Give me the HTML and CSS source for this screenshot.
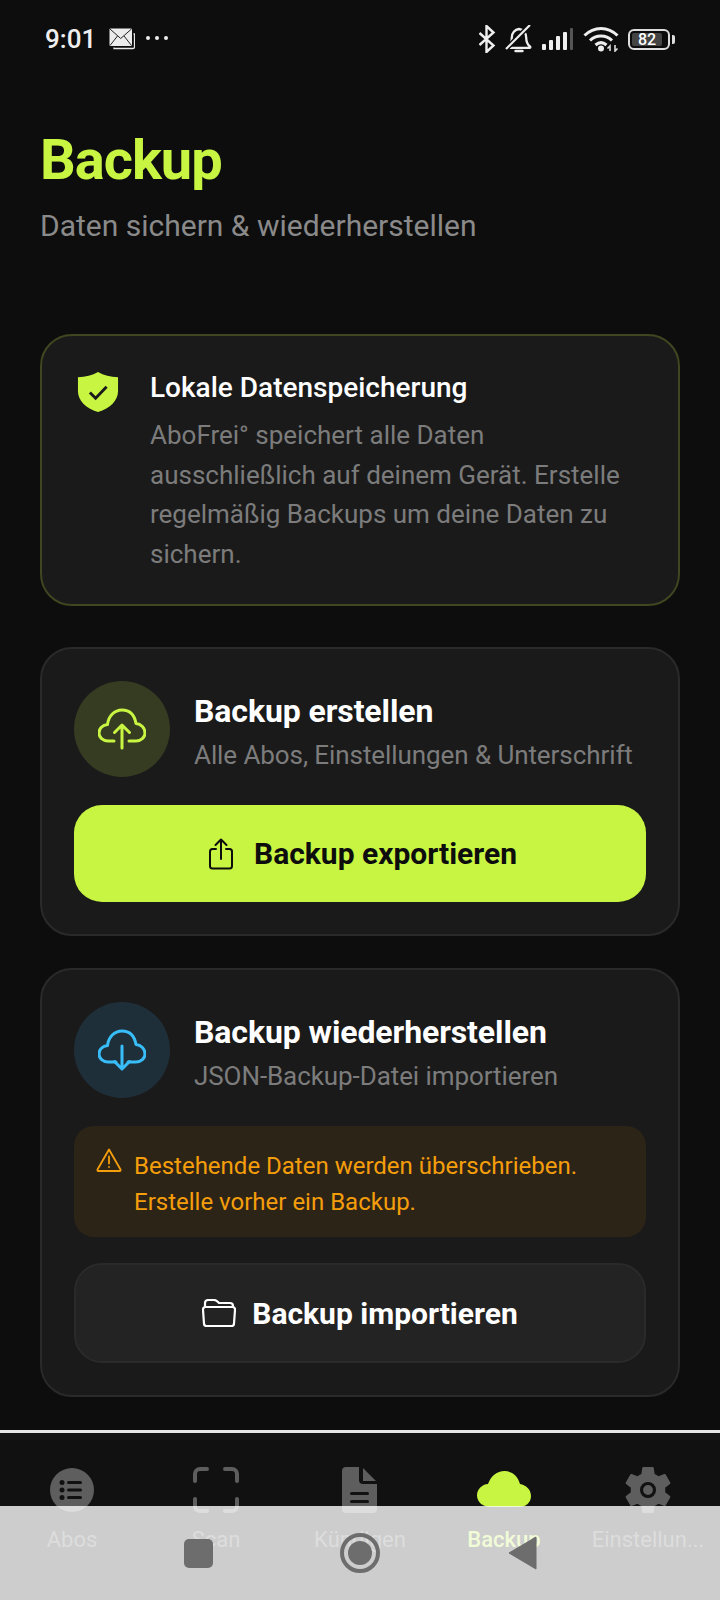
FILE: index.html
```html
<!DOCTYPE html>
<html lang="de">
<head>
  <meta charset="UTF-8" />
  <meta name="viewport" content="width=device-width, initial-scale=1.0"/>
  <title>Backup</title>
  <link rel="stylesheet" href="styles.css">
</head>
<body>
  <div class="app">
    <div class="statusbar">
      <div class="status-left">
        <span class="time">9:01</span>
        <svg class="ic-mail" width="26" height="22" viewBox="0 0 26 22">
          <path d="M5 19.500v1h19a1.500 1.500 0 0 0 1.500-1.500V6h-1" fill="none" stroke="#e8e8e8" stroke-width="1.300"/>
          <rect x="0.500" y="0.500" width="22.500" height="17.500" rx="1" fill="#ececec"/>
          <path d="M1 1l10.700 9.500L22.500 1M1 17.500l7.500-9.500M22.500 17.500L15 8" fill="none" stroke="#222" stroke-width="1"/>
        </svg>
        <span class="dots"><i></i><i></i><i></i></span>
      </div>
      <div class="status-right">
        <svg width="18" height="28" viewBox="0 0 18 28"><path d="M1.500 8l14 12.500L8.500 27V1l7 6.500L1.500 20" fill="none" stroke="#eee" stroke-width="2.400"/></svg>
        <svg class="ic-bell" width="28" height="28" viewBox="0 0 28 28">
          <path d="M3 21.500c2.800-2 3.800-4.500 3.800-9 0-4.500 3-8 7.200-8.500 4.200.5 7.200 4 7.200 8.500 0 4.500 1 7 3.800 9 .6.800.3 1.300-.5 1.300H3.500c-.8 0-1.100-.5-.5-1.300z" fill="none" stroke="#eee" stroke-width="2.300"/>
          <path d="M10.500 26h7" stroke="#eee" stroke-width="2.400" stroke-linecap="round"/>
          <path d="M1 24L25 0" stroke="#0d0d0d" stroke-width="5"/>
          <path d="M1 24L25 0" stroke="#eee" stroke-width="2.200"/>
        </svg>
        <svg class="ic-signal" width="32" height="22" viewBox="0 0 32 22">
          <rect x="0" y="16" width="4" height="6" rx="1" fill="#eee"/>
          <rect x="7" y="12" width="4" height="10" rx="1" fill="#eee"/>
          <rect x="14" y="8" width="4" height="14" rx="1" fill="#eee"/>
          <rect x="21" y="4" width="4" height="18" rx="1" fill="#eee"/>
          <rect x="28" y="0" width="3" height="22" rx="1" fill="#555"/>
        </svg>
        <svg class="ic-wifi" width="36" height="26" viewBox="0 0 36 26">
          <path d="M1.500 9.500C11 0 25 0 34.500 9.500M7 14.500c6-6 16-6 22 0M12.500 19c3.500-3 7.500-3 11 0" fill="none" stroke="#eee" stroke-width="3"/>
          <circle cx="18" cy="22.500" r="3" fill="#eee"/>
          <path d="M27 25v-5l-2.500 2.500M32 19v6l2.500-2.500" fill="none" stroke="#ddd" stroke-width="1.600"/>
        </svg>
        <div class="battery">
          <div class="battery-body"><span class="battery-fill">82</span></div>
          <div class="battery-cap"></div>
        </div>
      </div>
    </div>

    <div class="content">
      <div class="page-title">Backup</div>
      <div class="page-sub">Daten sichern &amp; wiederherstellen</div>

      <div class="card card-info">
        <svg class="shield" width="42" height="42" viewBox="0 0 44 44">
          <path d="M22 1c6 3.500 13 5 21 5.500V21c0 10-8 18-21 22C9 39 1 31 1 21V6.500C9 6 16 4.500 22 1z" fill="#c8f542"/>
          <path d="M13.500 22.500l6 6L31 16.500" fill="none" stroke="#1a1a1a" stroke-width="3"/>
        </svg>
        <div class="info-text">
          <div class="info-title">Lokale Datenspeicherung</div>
          <div class="info-body">AboFrei° speichert alle Daten ausschließlich auf deinem Gerät. Erstelle regelmäßig Backups um deine Daten zu sichern.</div>
        </div>
      </div>

      <div class="card">
        <div class="card-head">
          <div class="round round-lime">
            <svg width="48" height="48" viewBox="0 0 48 48" fill="none" stroke="#c8f542" stroke-width="3" stroke-linecap="round" stroke-linejoin="round">
              <path d="M16 36H10C5 36 1 32.500 1 28C1 23.500 4.500 20 9.500 19.500C10.500 11 16.500 5 24 5C31.500 5 36.500 10 38 18.500C43 19 47 23 47 28C47 32.500 43 36 38 36H31"/>
              <path d="M24 43V20M16.500 27.500L24 20L31.500 27.500"/>
            </svg>
          </div>
          <div class="card-text">
            <div class="card-title">Backup erstellen</div>
            <div class="card-sub">Alle Abos, Einstellungen &amp; Unterschrift</div>
          </div>
        </div>
        <div class="btn btn-lime">
          <svg width="26" height="32" viewBox="0 0 26 32" fill="none" stroke="#0d0d0d" stroke-width="2" stroke-linecap="round" stroke-linejoin="round">
            <path d="M8 11H4.500A2.500 2.500 0 0 0 2 13.500V28A2.500 2.500 0 0 0 4.500 30.500H21.500A2.500 2.500 0 0 0 24 28V13.500A2.500 2.500 0 0 0 21.500 11H18"/>
            <path d="M13 21V1.500M7.500 7L13 1.500L18.500 7"/>
          </svg>
          <span>Backup exportieren</span>
        </div>
      </div>

      <div class="card">
        <div class="card-head">
          <div class="round round-blue">
            <svg width="48" height="48" viewBox="0 0 48 48" fill="none" stroke="#38bdf8" stroke-width="3" stroke-linecap="round" stroke-linejoin="round">
              <path d="M18 36H10C5 36 1 32.500 1 28C1 23.500 4.500 20 9.500 19.500C10.500 11 16.500 5 24 5C31.500 5 36.500 10 38 18.500C43 19 47 23 47 28C47 32.500 43 36 38 36H30"/>
              <path d="M24 20V43M16.500 35.500L24 43L31.500 35.500"/>
            </svg>
          </div>
          <div class="card-text">
            <div class="card-title">Backup wiederherstellen</div>
            <div class="card-sub">JSON-Backup-Datei importieren</div>
          </div>
        </div>
        <div class="warning">
          <svg width="26" height="24" viewBox="0 0 26 24" fill="none" stroke="#f59e0b" stroke-width="1.800" stroke-linejoin="round" stroke-linecap="round">
            <path d="M13 1.500L1.500 21.500A1 1 0 0 0 2.300 23H23.700A1 1 0 0 0 24.500 21.500Z"/>
            <path d="M13 8.500V15.500M13 18.800V19"/>
          </svg>
          <div class="warning-text">Bestehende Daten werden überschrieben. Erstelle vorher ein Backup.</div>
        </div>
        <div class="btn btn-dark">
          <svg width="34" height="28" viewBox="0 0 34 28" fill="none" stroke="#fff" stroke-width="2.200" stroke-linejoin="round">
            <path d="M3 8V4a3 3 0 0 1 3-3h6c2 0 3 1 4 2l1 1h11a3 3 0 0 1 3 3v1"/>
            <path d="M3.500 8h27A2.500 2.500 0 0 1 33 10.800L32 24.500A2.500 2.500 0 0 1 29.500 27H4.500A2.500 2.500 0 0 1 2 24.500L1 10.800A2.500 2.500 0 0 1 3.500 8z"/>
          </svg>
          <span>Backup importieren</span>
        </div>
      </div>
    </div>

    <div class="tabbar">
      <div class="tab">
        <svg width="48" height="48" viewBox="0 0 48 48">
          <circle cx="24" cy="24" r="22" fill="#5e5e5e"/>
          <g fill="#111"><circle cx="14" cy="16.500" r="2.500"/><circle cx="14" cy="24" r="2.500"/><circle cx="14" cy="31.500" r="2.500"/>
          <rect x="19" y="15" width="15" height="3" rx="1.500"/><rect x="19" y="22.500" width="15" height="3" rx="1.500"/><rect x="19" y="30" width="15" height="3" rx="1.500"/></g>
        </svg>
        <span>Abos</span>
      </div>
      <div class="tab">
        <svg width="48" height="48" viewBox="0 0 48 48" fill="none" stroke="#5e5e5e" stroke-width="4" stroke-linecap="round" stroke-linejoin="round">
          <path d="M15 3H8a5 5 0 0 0-5 5v7M33 3h7a5 5 0 0 1 5 5v7M15 45H8a5 5 0 0 1-5-5v-7M33 45h7a5 5 0 0 0 5-5v-7"/>
        </svg>
        <span>Scan</span>
      </div>
      <div class="tab">
        <svg width="48" height="48" viewBox="0 0 48 48">
          <path d="M10 1h13v13a4 4 0 0 0 4 4h14v25a4 4 0 0 1-4 4H10a4 4 0 0 1-4-4V5a4 4 0 0 1 4-4zM27 2l13 13H27z" fill="#5e5e5e"/>
          <g fill="#111"><rect x="14" y="26" width="19" height="3" rx="1.500"/><rect x="14" y="34" width="19" height="3" rx="1.500"/></g>
        </svg>
        <span>Kündigen</span>
      </div>
      <div class="tab tab-active">
        <svg width="54" height="48" viewBox="0 0 54 48">
          <path d="M13 41C6 41 0 36 0 29.500C0 23 5 18.500 11 18C14 10 20 5 27.500 5C35 5 41 10 43 18C49 19 54 23.500 54 30C54 36.500 49 41 42 41Z" fill="#c8f542"/>
        </svg>
        <span>Backup</span>
      </div>
      <div class="tab">
        <svg width="48" height="48" viewBox="2.500 2 19 20">
          <path fill="#5e5e5e" d="M19.140 12.940c.04-.3.06-.61.06-.94 0-.32-.02-.64-.07-.94l2.030-1.580c.18-.14.23-.41.12-.61l-1.920-3.320c-.12-.22-.37-.29-.59-.22l-2.390.96c-.5-.38-1.030-.7-1.620-.94l-.36-2.540c-.04-.24-.24-.41-.48-.41h-3.840c-.24 0-.43.17-.47.41l-.36 2.540c-.59.24-1.130.57-1.620.94l-2.390-.96c-.22-.08-.47 0-.59.22L2.740 8.870c-.12.21-.08.47.12.61l2.030 1.580c-.05.3-.09.63-.09.94s.02.64.07.94l-2.030 1.580c-.18.14-.23.41-.12.61l1.920 3.320c.12.22.37.29.59.22l2.390-.96c.5.38 1.030.7 1.620.94l.36 2.540c.05.24.24.41.48.41h3.840c.24 0 .44-.17.47-.41l.36-2.540c.59-.24 1.130-.56 1.620-.94l2.390.96c.22.08.47 0 .59-.22l1.920-3.320c.12-.22.07-.47-.12-.61l-2.010-1.580z"/>
          <circle cx="12" cy="12" r="2.700" fill="none" stroke="#111" stroke-width="1.300"/>
        </svg>
        <span>Einstellun...</span>
      </div>
    </div>

    <div class="navbar">
      <div class="nav-square"></div>
      <div class="nav-circle"><div class="nav-dot"></div></div>
      <svg width="28" height="34" viewBox="0 0 28 34"><path d="M0 17L27 1v32z" fill="#6d6d6d" stroke="#6d6d6d" stroke-linejoin="round"/></svg>
    </div>
  </div>
</body>
</html>
```

FILE: styles.css
```css
* {
  box-sizing: border-box;
}
body {
  margin: 0;
  background-color: #0d0d0d;
  font-family: Roboto, "Liberation Sans", sans-serif;
  color: #fff;
}
.app {
  position: relative;
  width: 720px;
  height: 1600px;
  overflow: hidden;
  display: flex;
  flex-direction: column;
}
.statusbar {
  height: 78px;
  padding: 0 45px;
  display: flex;
  justify-content: space-between;
  align-items: center;
  color: #eee;
}
.status-left,
.status-right {
  display: flex;
  align-items: center;
}
.time {
  font-size: 26px;
  font-weight: 500;
  margin-right: 13px;
}
.dots {
  display: flex;
  gap: 5px;
  margin-left: 11px;
  margin-top: -2px;
}
.dots i {
  width: 4px;
  height: 4px;
  border-radius: 50%;
  background: #eee;
}
.status-right {
  gap: 9px;
}
.battery {
  display: flex;
  align-items: center;
  gap: 2px;
}
.battery-body {
  width: 42px;
  height: 21px;
  border: 2px solid #ddd;
  border-radius: 6px;
  padding: 2px;
}
.battery-fill {
  display: block;
  width: 30px;
  height: 13px;
  background: #444;
  border-radius: 2px;
  font-size: 16px;
  line-height: 13px;
  font-weight: 500;
  text-align: center;
  color: #fff;
}
.battery-cap {
  width: 3px;
  height: 9px;
  background: #ddd;
  border-radius: 0 2px 2px 0;
}
.content {
  flex: 1;
  padding: 48px 40px 0;
}
.page-title {
  font-size: 56px;
  line-height: 68px;
  font-weight: 700;
  letter-spacing: -1px;
  color: #c8f542;
}
.page-sub {
  font-size: 30px;
  line-height: 36px;
  color: #8a8a8a;
  margin-top: 14px;
  margin-bottom: 90px;
}
.card {
  background-color: #1a1a1a;
  border: 2px solid #2a2a2a;
  border-radius: 32px;
  padding: 32px;
  margin-bottom: 32px;
}
.card-info {
  display: flex;
  gap: 31px;
  border-color: #3f4620;
  padding: 34px 34px 30px 35px;
  margin-bottom: 41px;
}
.shield {
  flex-shrink: 0;
  margin-top: 1px;
}
.info-title {
  font-size: 28px;
  line-height: 36px;
  font-weight: 500;
}
.info-body {
  font-size: 26px;
  line-height: 39.500px;
  color: #7c7c7c;
  margin-top: 10px;
}
.card-head {
  display: flex;
  align-items: center;
  gap: 24px;
}
.round {
  width: 96px;
  height: 96px;
  border-radius: 50%;
  display: flex;
  align-items: center;
  justify-content: center;
  flex-shrink: 0;
}
.round-lime {
  background-color: #363c22;
}
.round-blue {
  background-color: #1f2f3a;
}
.card-text {
  padding-top: 6px;
}
.card-title {
  font-size: 32px;
  line-height: 38px;
  font-weight: 700;
  letter-spacing: -0.1px;
}
.card-sub {
  font-size: 26px;
  line-height: 36px;
  letter-spacing: -0.08px;
  color: #7c7c7c;
  margin-top: 7px;
}
.btn {
  display: flex;
  align-items: center;
  justify-content: center;
  gap: 20px;
  font-size: 30px;
  font-weight: 700;
  border-radius: 28px;
}
.btn-lime {
  height: 97px;
  margin-top: 28px;
  padding-left: 5px;
  background-color: #c8f542;
  color: #0d0d0d;
}
.btn-dark {
  height: 100px;
  margin-top: 26px;
  gap: 16px;
  background-color: #232323;
  border: 2px solid #2a2a2a;
}
.warning {
  display: flex;
  gap: 12px;
  margin-top: 28px;
  padding: 22px 22px 17px;
  background-color: #2d2418;
  border-radius: 20px;
}
.warning svg {
  flex-shrink: 0;
}
.warning-text {
  font-size: 24px;
  line-height: 36px;
  color: #f59e0b;
}
.tabbar {
  height: 170px;
  border-top: 3px solid #e4e4e4;
  background-color: #111;
  display: grid;
  grid-template-columns: repeat(5, 144px);
  padding-top: 33px;
}
.tab {
  display: flex;
  flex-direction: column;
  align-items: center;
  gap: 13px;
  font-size: 22px;
  color: #5e5e5e;
}
.tab-active {
  color: #c8f542;
  font-weight: 500;
}
.navbar {
  position: absolute;
  left: 0;
  right: 0;
  bottom: 0;
  height: 94px;
  background-color: rgba(253, 253, 253, 0.8);
  display: flex;
  align-items: center;
  padding-left: 184px;
}
.nav-square {
  width: 29px;
  height: 29px;
  background: #6d6d6d;
  border-radius: 5px;
}
.nav-circle {
  width: 40px;
  height: 40px;
  border: 4px solid #6d6d6d;
  border-radius: 50%;
  margin-left: 127px;
  display: flex;
  align-items: center;
  justify-content: center;
}
.nav-dot {
  width: 24px;
  height: 24px;
  border-radius: 50%;
  background: #6d6d6d;
}
.navbar svg {
  margin-left: 129px;
}
```
